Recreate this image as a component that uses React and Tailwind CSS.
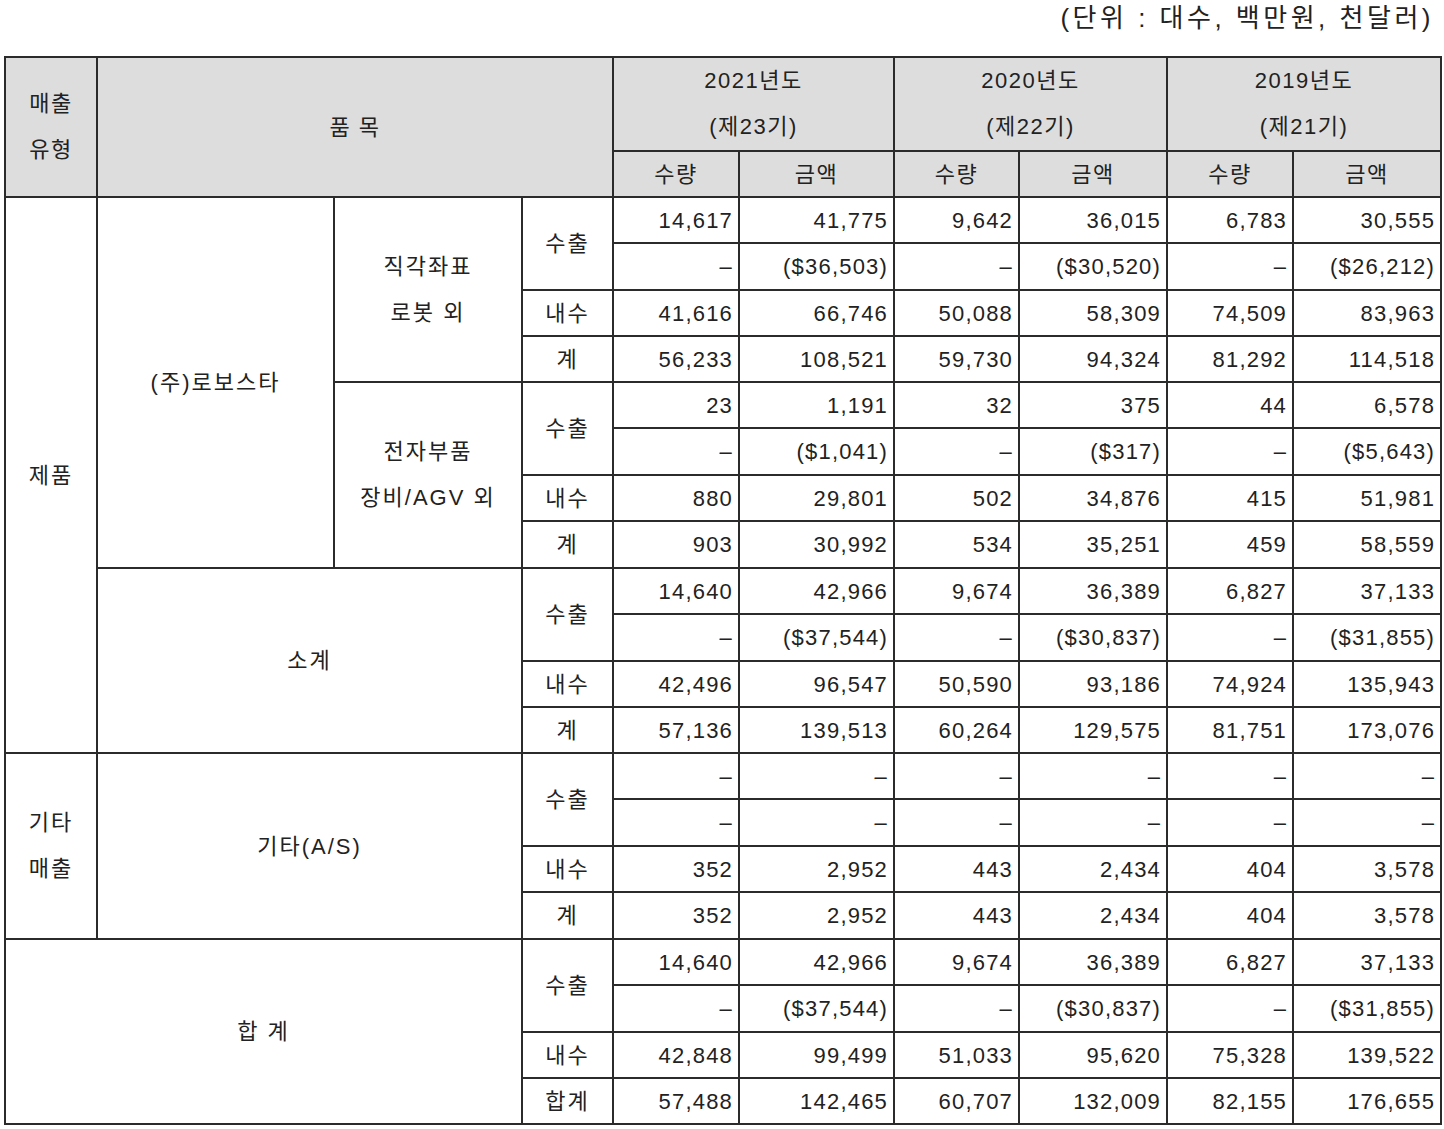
const cell = "border-2 border-[#2b2b2b] p-0";
const num = `${cell} text-right pr-[5px] tracking-[1.2px]`;
const lbl = `${cell} text-center tracking-[2px]`;
const head = `${cell} text-center bg-[#dddddd] tracking-[1.5px]`;

const D = "–";

const rows = [
  ["14,617", "41,775", "9,642", "36,015", "6,783", "30,555"],
  [D, "($36,503)", D, "($30,520)", D, "($26,212)"],
  ["41,616", "66,746", "50,088", "58,309", "74,509", "83,963"],
  ["56,233", "108,521", "59,730", "94,324", "81,292", "114,518"],
  ["23", "1,191", "32", "375", "44", "6,578"],
  [D, "($1,041)", D, "($317)", D, "($5,643)"],
  ["880", "29,801", "502", "34,876", "415", "51,981"],
  ["903", "30,992", "534", "35,251", "459", "58,559"],
  ["14,640", "42,966", "9,674", "36,389", "6,827", "37,133"],
  [D, "($37,544)", D, "($30,837)", D, "($31,855)"],
  ["42,496", "96,547", "50,590", "93,186", "74,924", "135,943"],
  ["57,136", "139,513", "60,264", "129,575", "81,751", "173,076"],
  [D, D, D, D, D, D],
  [D, D, D, D, D, D],
  ["352", "2,952", "443", "2,434", "404", "3,578"],
  ["352", "2,952", "443", "2,434", "404", "3,578"],
  ["14,640", "42,966", "9,674", "36,389", "6,827", "37,133"],
  [D, "($37,544)", D, "($30,837)", D, "($31,855)"],
  ["42,848", "99,499", "51,033", "95,620", "75,328", "139,522"],
  ["57,488", "142,465", "60,707", "132,009", "82,155", "176,655"],
];

const heights = [
  "h-[46px]", "h-[47px]", "h-[46px]", "h-[46px]", "h-[46px]",
  "h-[47px]", "h-[46px]", "h-[47px]", "h-[46px]", "h-[47px]",
  "h-[46px]", "h-[46px]", "h-[46px]", "h-[47px]", "h-[46px]",
  "h-[47px]", "h-[46px]", "h-[47px]", "h-[46px]", "h-[46px]",
];

function Lines({ items }) {
  return (
    <div className="flex flex-col items-center">
      {items.map((t, i) => (
        <span key={i} className="leading-[46px]">{t}</span>
      ))}
    </div>
  );
}

// left-side label cells for each row index
function leftCells(i) {
  const out = [];
  if (i === 0) {
    out.push(<td key="a" rowSpan={12} className={lbl}>제품</td>);
    out.push(<td key="b" rowSpan={8} className={lbl}>(주)로보스타</td>);
    out.push(<td key="c" rowSpan={4} className={lbl}><Lines items={["직각좌표", "로봇 외"]} /></td>);
  }
  if (i === 4) {
    out.push(<td key="c" rowSpan={4} className={lbl}><Lines items={["전자부품", "장비/AGV 외"]} /></td>);
  }
  if (i === 8) {
    out.push(<td key="b" rowSpan={4} colSpan={2} className={lbl}>소계</td>);
  }
  if (i === 12) {
    out.push(<td key="a" rowSpan={4} className={lbl}><Lines items={["기타", "매출"]} /></td>);
    out.push(<td key="b" rowSpan={4} colSpan={2} className={lbl}>기타(A/S)</td>);
  }
  if (i === 16) {
    out.push(<td key="a" rowSpan={4} colSpan={3} className={lbl}>합 계</td>);
  }
  const k = i % 4;
  if (k === 0) out.push(<td key="d" rowSpan={2} className={lbl}>수출</td>);
  if (k === 2) out.push(<td key="d" className={lbl}>내수</td>);
  if (k === 3) out.push(<td key="d" className={lbl}>{i === 19 ? "합계" : "계"}</td>);
  return out;
}

export default function App() {
  return (
    <div className="w-[1444px] h-[1129px] bg-white text-[#222222] font-['Liberation_Sans','Noto_Sans_CJK_KR',sans-serif] text-[22px]">
      <div className="h-[56px] flex justify-end pr-[10px] text-[26px] leading-[36px] tracking-[3.5px]">
        (단위 : 대수, 백만원, 천달러)
      </div>
      <table className="table-fixed border-collapse w-[1436px] ml-[4px]">
        <colgroup>
          <col className="w-[92px]" />
          <col className="w-[237px]" />
          <col className="w-[188px]" />
          <col className="w-[91px]" />
          <col className="w-[126px]" />
          <col className="w-[155px]" />
          <col className="w-[125px]" />
          <col className="w-[148px]" />
          <col className="w-[126px]" />
          <col className="w-[148px]" />
        </colgroup>
        <thead>
          <tr className="h-[93px]">
            <td rowSpan={2} className={head}><Lines items={["매출", "유형"]} /></td>
            <td rowSpan={2} colSpan={3} className={head}>품 목</td>
            <td colSpan={2} className={head}><Lines items={["2021년도", "(제23기)"]} /></td>
            <td colSpan={2} className={head}><Lines items={["2020년도", "(제22기)"]} /></td>
            <td colSpan={2} className={head}><Lines items={["2019년도", "(제21기)"]} /></td>
          </tr>
          <tr className="h-[46px]">
            <td className={head}>수량</td>
            <td className={head}>금액</td>
            <td className={head}>수량</td>
            <td className={head}>금액</td>
            <td className={head}>수량</td>
            <td className={head}>금액</td>
          </tr>
        </thead>
        <tbody>
          {rows.map((r, i) => (
            <tr key={i} className={heights[i]}>
              {leftCells(i)}
              {r.map((v, j) => (
                <td key={j} className={num}>{v}</td>
              ))}
            </tr>
          ))}
        </tbody>
      </table>
    </div>
  );
}
